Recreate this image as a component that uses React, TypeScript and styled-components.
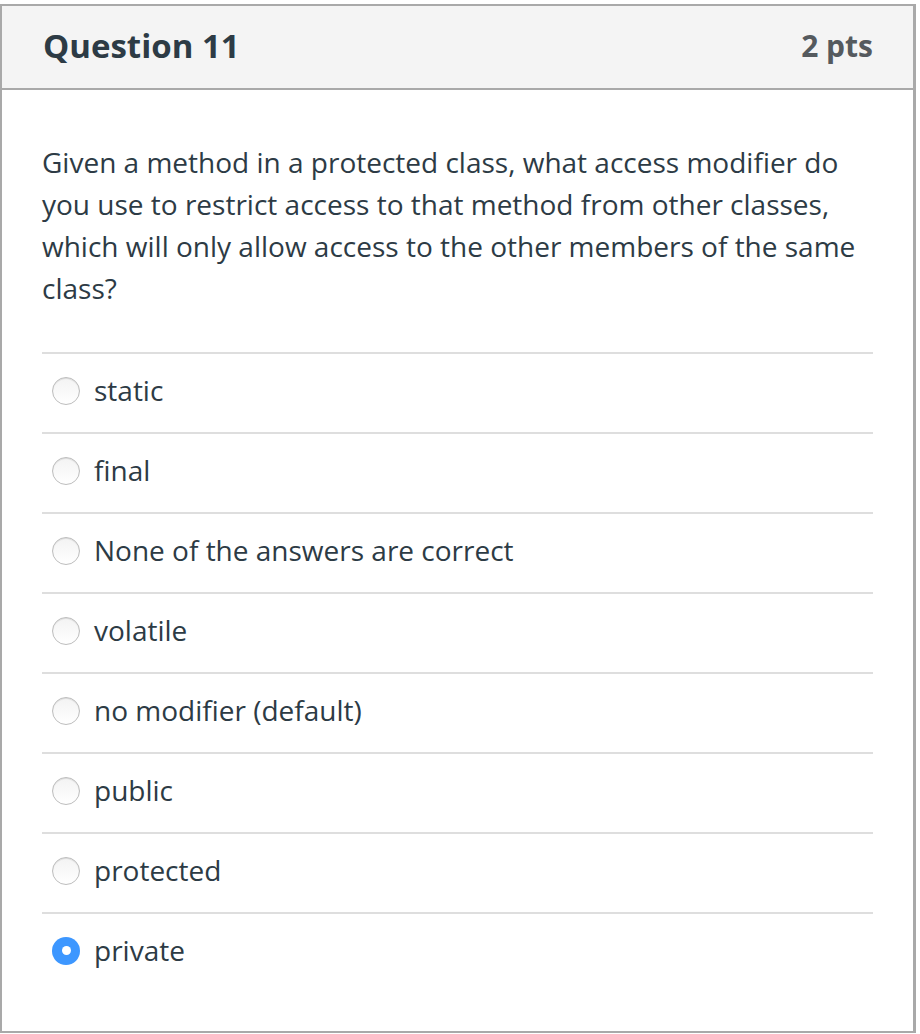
import React from "react";
import styled, { createGlobalStyle } from "styled-components";

const Global = createGlobalStyle`
  html, body { margin: 0; padding: 0; background: #fff; }
  body { font-family: "Open Sans", "Noto Sans", sans-serif; color: #2d3b45; }
`;

const Card = styled.div`
  box-sizing: border-box;
  width: 916px;
  margin-top: 4px;
  border: 2px solid #a9a9a9;
  border-right-width: 3px;
  background: #fff;
  height: 1029px;
  display: flex;
  flex-direction: column;
`;

const Header = styled.div`
  box-sizing: border-box;
  height: 84px;
  flex: none;
  background: #f4f4f4;
  border-bottom: 2px solid #a9a9a9;
  display: flex;
  align-items: center;
  justify-content: space-between;
  padding: 0 40px 3px 41px;
`;

const Title = styled.h2`
  margin: 0;
  font-size: 33px;
  font-weight: 700;
  color: #2d3b45;
`;

const Points = styled.span`
  font-size: 30px;
  font-weight: 700;
  color: #555a5e;
`;

const Body = styled.div`
  padding: 51px 40px 0 40px;
`;

const Prompt = styled.p`
  margin: 0 0 43px 0;
  font-size: 28px;
  line-height: 42px;
  color: #2d3b45;
`;

const Answers = styled.div`
  display: flex;
  flex-direction: column;
`;

const Row = styled.label`
  box-sizing: border-box;
  height: 80px;
  display: flex;
  align-items: center;
  gap: 14px;
  padding: 0 0 7px 10px;
  border-top: 2px solid #dedede;
  font-size: 28px;
  color: #2d3b45;
`;

const Radio = styled.span<{ $checked?: boolean }>`
  box-sizing: border-box;
  width: 28px;
  height: 28px;
  border-radius: 50%;
  flex: none;
  position: relative;
  top: 1px;
  ${(p) =>
    p.$checked
      ? `background: #3d97ff; border: none;`
      : `background: linear-gradient(#f3f3f3, #ffffff); border: 1.5px solid #bdbdbd; box-shadow: inset 0 1px 1px rgba(0,0,0,0.1);`}
  &::after {
    content: "";
    display: ${(p) => (p.$checked ? "block" : "none")};
    position: absolute;
    left: 50%;
    top: 50%;
    width: 9px;
    height: 9px;
    margin: -4.5px 0 0 -4.5px;
    border-radius: 50%;
    background: #fff;
  }
`;

const answers = [
  "static",
  "final",
  "None of the answers are correct",
  "volatile",
  "no modifier (default)",
  "public",
  "protected",
  "private",
];

export default function App() {
  return (
    <>
      <Global />
      <Card>
        <Header>
          <Title>Question 11</Title>
          <Points>2 pts</Points>
        </Header>
        <Body>
          <Prompt>
            Given a method in a protected class, what access modifier do you use to restrict
            access to that method from other classes, which will only allow access to the other
            members of the same class?
          </Prompt>
          <Answers>
            {answers.map((a, i) => (
              <Row key={a}>
                <Radio $checked={i === answers.length - 1} />
                {a}
              </Row>
            ))}
          </Answers>
        </Body>
      </Card>
    </>
  );
}
